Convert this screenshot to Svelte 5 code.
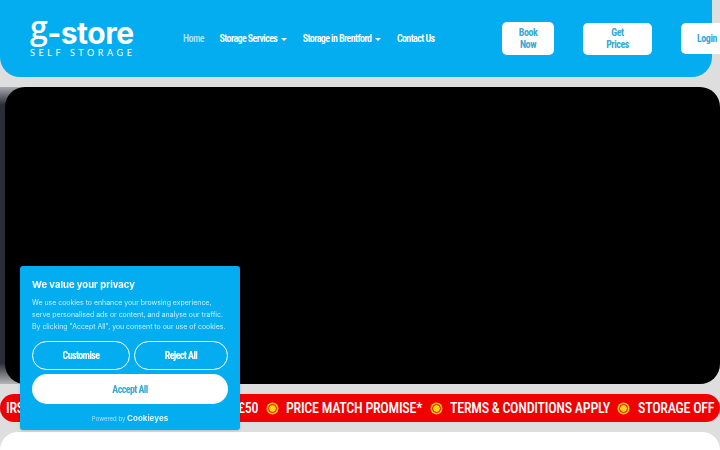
<script>
	const nav = [
		{ label: 'Home', current: true },
		{ label: 'Storage Services', caret: true },
		{ label: 'Storage in Brentford', caret: true },
		{ label: 'Contact Us' }
	];
	const ticker = ['PRICE MATCH PROMISE*', 'TERMS & CONDITIONS APPLY', 'STORAGE OFF'];
</script>

<div class="page">
	<header class="header">
		<a class="logo" href="#top">
			<span class="logo-main"><span class="logo-g">g</span>-store</span>
			<span class="logo-sub">SELF STORAGE</span>
		</a>
		<nav class="nav">
			{#each nav as item}
				<a href="#top" class="nav-item" class:current={item.current}>
					<span>{item.label}</span>
					{#if item.caret}<i class="caret"></i>{/if}
				</a>
			{/each}
		</nav>
		<div class="actions">
			<a href="#top" class="btn book">Book<br />Now</a>
			<a href="#top" class="btn prices">Get<br />Prices</a>
			<a href="#top" class="btn login">Login</a>
		</div>
	</header>

	<section class="hero">
		<div class="hero-video"></div>
	</section>

	<div class="ticker">
		<div class="ticker-track">
			<span class="ticker-text first">IRST MONTHS SELF STORAGE FROM ONLY £50</span>
			{#each ticker as text}
				<span class="dot"></span>
				<span class="ticker-text">{text}</span>
			{/each}
		</div>
	</div>

	<section class="content"></section>

	<aside class="cookie">
		<h2>We value your privacy</h2>
		<p>
			We use cookies to enhance your browsing experience,<br />
			serve personalised ads or content, and analyse our traffic.<br />
			By clicking "Accept All", you consent to our use of cookies.
		</p>
		<div class="cookie-row">
			<button class="outline">Customise</button>
			<button class="outline">Reject All</button>
		</div>
		<button class="accept">Accept All</button>
		<div class="powered"><span>Powered by</span> <b>Cookieyes</b></div>
	</aside>
</div>

<style>
	:global(body) {
		margin: 0;
		background: #dedede;
		overflow: hidden;
	}

	.page {
		width: 720px;
		height: 450px;
		overflow: hidden;
		display: flex;
		flex-direction: column;
		gap: 10px;
		font-family: Roboto, 'Liberation Sans', sans-serif;
	}

	a {
		text-decoration: none;
	}

	.header {
		flex: 0 0 77px;
		width: 712px;
		box-sizing: border-box;
		background: #03adef;
		border-radius: 0 0 20px 20px;
		display: flex;
		align-items: center;
		padding: 0 0 0 30px;
	}

	.logo {
		display: flex;
		flex-direction: column;
		gap: 2px;
		width: 103px;
		color: #fff;
		margin-top: 2px;
	}

	.logo-main {
		display: block;
		height: 25px;
		font-family: Inter, sans-serif;
		font-weight: 700;
		font-size: 30px;
		line-height: 22px;
		letter-spacing: -0.5px;
		white-space: nowrap;
	}

	.logo-g {
		font-family: 'Open Sans', sans-serif;
		font-weight: 600;
		font-size: 32px;
		vertical-align: 5px;
		line-height: 0;
	}

	.logo-sub {
		font-family: Lato, sans-serif;
		font-size: 9px;
		line-height: 8px;
		letter-spacing: 3.6px;
		white-space: nowrap;
	}

	.nav {
		display: flex;
		align-items: center;
		gap: 15.5px;
		margin-left: 50px;
		width: 251px;
		font-size: 10px;
		font-weight: 600;
		font-stretch: 75%;
		letter-spacing: -0.6px;
		white-space: nowrap;
	}

	.nav-item {
		display: flex;
		align-items: center;
		gap: 4px;
		color: #fff;
	}

	.nav-item.current {
		color: #a9e2f9;
	}

	.caret {
		width: 0;
		height: 0;
		border-left: 3px solid transparent;
		border-right: 3px solid transparent;
		border-top: 3px solid #fff;
		margin-top: 1px;
	}

	.actions {
		display: flex;
		align-items: center;
		gap: 29px;
		margin-left: 68px;
		flex: none;
	}

	.btn {
		background: #fff;
		color: #36a9d6;
		border-radius: 5px;
		font-size: 10px;
		font-weight: 700;
		font-stretch: 75%;
		letter-spacing: -0.45px;
		line-height: 12px;
		text-align: center;
		box-sizing: border-box;
		display: flex;
		align-items: center;
		justify-content: center;
	}

	.book {
		width: 52px;
		height: 33px;
	}

	.prices {
		width: 69px;
		height: 32px;
	}

	.login {
		width: 50px;
		height: 31px;
		justify-content: flex-start;
		padding-left: 16px;
		border-radius: 5px 0 0 5px;
	}

	.hero {
		flex: 0 0 297px;
		display: flex;
		box-sizing: border-box;
		padding-left: 5px;
		/* slate backdrop only shows on the left edge and behind the left corners */
		background: linear-gradient(#a8a8b0, #2a2d36 6%, #2a2d36 93%, #b4b4b6) no-repeat left / 25px 100%;
	}

	.hero-video {
		flex: 1;
		background: #000;
		border-radius: 20px;
	}

	.ticker {
		flex: 0 0 28px;
		background: #f00000;
		border-radius: 14px;
		overflow: hidden;
		display: flex;
		align-items: center;
		padding-left: 6px;
	}

	.ticker-track {
		display: flex;
		align-items: center;
		gap: 9.5px;
		white-space: nowrap;
		color: #fff;
		font-size: 14px;
		font-weight: 500;
		font-stretch: 75%;
		letter-spacing: -0.25px;
	}

	.first {
		width: 252px;
		overflow: hidden;
	}

	.dot {
		flex: none;
		width: 7px;
		height: 7px;
		border-radius: 50%;
		background: #ffd21a;
		border: 1px solid #f00000;
		box-shadow: 0 0 0 1.5px #ffc21a;
	}

	.content {
		flex: 1;
		background: #fff;
		border-radius: 20px 20px 0 0;
	}

	/* cookie banner sits over the page */
	.cookie {
		position: fixed;
		left: 20px;
		top: 266px;
		width: 220px;
		height: 164px;
		box-sizing: border-box;
		background: #03adef;
		border-radius: 3px;
		padding: 13px 12px 0;
		display: flex;
		flex-direction: column;
		box-shadow: 0 1px 3px rgba(0, 0, 0, 0.15);
	}

	.cookie h2 {
		margin: 0;
		color: #fff;
		font-family: Inter, sans-serif;
		font-size: 9.5px;
		font-weight: 700;
		line-height: 12px;
	}

	.cookie p {
		margin: 6px 0 0;
		color: #c8eefc;
		font-family: Inter, sans-serif;
		font-size: 6.95px;
		line-height: 12px;
		height: 36px;
		white-space: nowrap;
	}

	.cookie-row {
		display: grid;
		grid-template-columns: 98px 94px;
		gap: 4px;
		margin-top: 8px;
	}

	button {
		font-family: Roboto, sans-serif;
		font-size: 10px;
		font-weight: 700;
		font-stretch: 75%;
		letter-spacing: -0.6px;
		border-radius: 15px;
		padding: 0;
	}

	.outline {
		height: 29px;
		background: transparent;
		border: 1px solid #fff;
		color: #fff;
	}

	.accept {
		margin-top: 4px;
		height: 30px;
		background: #fff;
		border: 0;
		color: #36a9d6;
	}

	.powered {
		margin-top: 9px;
		text-align: center;
		font-family: Inter, sans-serif;
		font-size: 6px;
		line-height: 10px;
		color: #a9e2f9;
	}

	.powered b {
		font-size: 8px;
		font-weight: 700;
		color: #d4f1fd;
	}
</style>
